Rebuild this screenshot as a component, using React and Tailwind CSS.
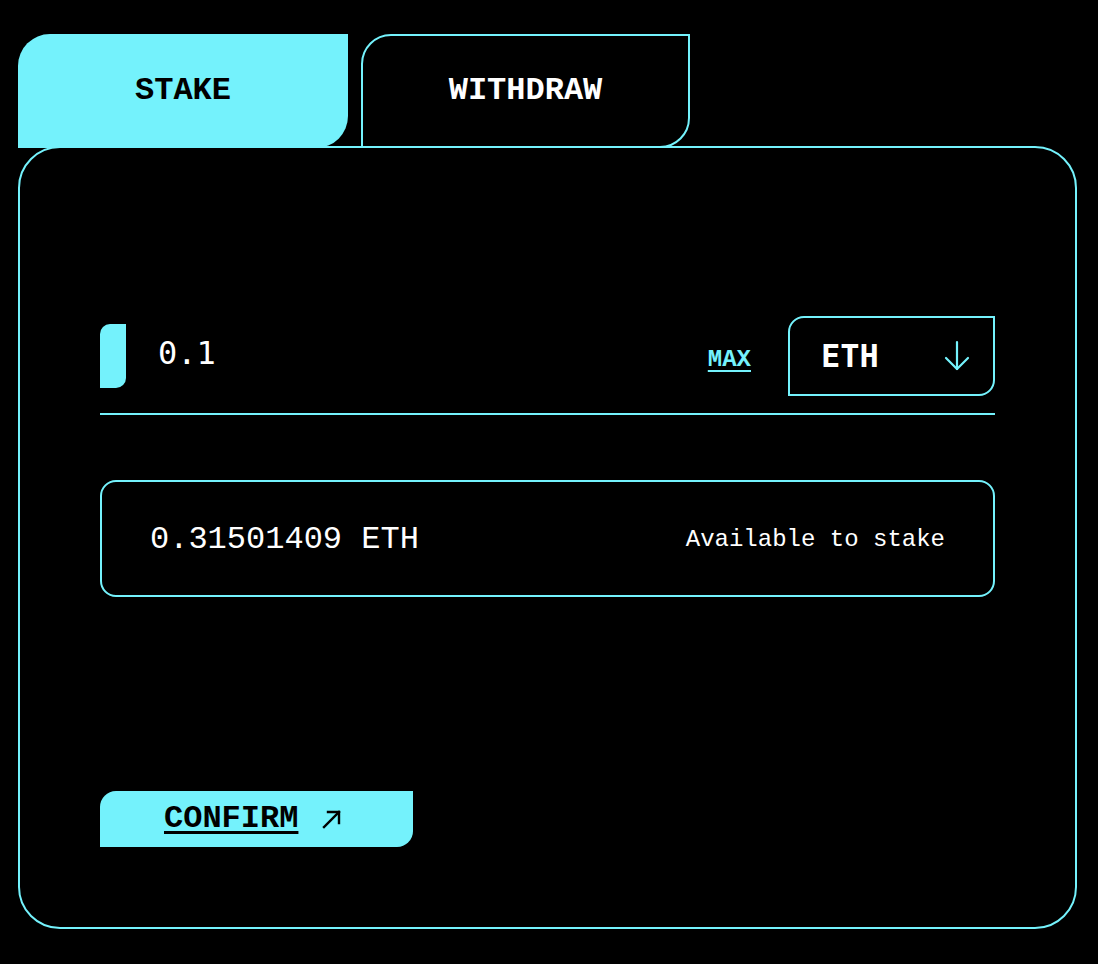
import { useState } from "react";

const mono = { fontFamily: '"Liberation Mono", "DejaVu Sans Mono", monospace' };

function ArrowDown() {
  return (
    <svg width="26" height="32" viewBox="0 0 26 32" fill="none" stroke="#74F2FC" strokeWidth="2.2" strokeLinecap="round" strokeLinejoin="round">
      <path d="M13 2 V29" />
      <path d="M2 18 L13 29 L24 18" />
    </svg>
  );
}

function ArrowUpRight() {
  return (
    <svg width="20" height="20" viewBox="0 0 20 20" fill="none" stroke="#000" strokeWidth="2.4" strokeLinecap="square">
      <path d="M2 18 L17 3" />
      <path d="M6 3 H17 V14" />
    </svg>
  );
}

export default function App() {
  const [tab, setTab] = useState("stake");
  const [amount, setAmount] = useState("0.1");

  return (
    <div className="min-h-screen w-full bg-black pt-[34px] pl-[18px] text-white" style={mono}>
      <div className="w-[1059px]">
        {/* Onglets */}
        <div className="flex gap-[13px]">
          <button
            onClick={() => setTab("stake")}
            className="flex h-[114px] w-[330px] items-center justify-center rounded-tl-[32px] rounded-br-[32px] bg-[#74F2FC] text-[32px] font-bold text-black"
          >
            STAKE
          </button>
          <button
            onClick={() => setTab("withdraw")}
            className="flex h-[114px] w-[329px] items-center justify-center rounded-tl-[30px] rounded-br-[30px] border-2 border-[#74F2FC] bg-black text-[32px] font-bold text-white"
          >
            WITHDRAW
          </button>
        </div>

        {/* Carte principale */}
        <div className="-mt-[2px] flex h-[783px] flex-col rounded-[42px] border-2 border-[#74F2FC] px-[80px] pt-[168px]">
          <div className="flex h-[80px] items-center">
            <div className="h-[64px] w-[26px] rounded-tl-[10px] rounded-br-[10px] bg-[#74F2FC]" />
            <input
              value={amount}
              onChange={(e) => setAmount(e.target.value)}
              className="ml-[32px] -mt-[6px] flex-1 bg-transparent text-[32px] text-white outline-none"
              style={{ fontFamily: '"DejaVu Sans Mono", monospace' }}
            />
            <button className="mt-[8px] text-[24px] font-bold text-[#74F2FC] underline decoration-2 underline-offset-4">
              MAX
            </button>
            <div className="ml-[37px] flex h-[80px] w-[207px] items-center justify-between rounded-tl-[16px] rounded-br-[16px] border-2 border-[#74F2FC] pl-[31px] pr-[23px]">
              <span className="text-[32px] font-bold" style={{ fontFamily: '"DejaVu Sans Mono", monospace' }}>ETH</span>
              <ArrowDown />
            </div>
          </div>
          <div className="mt-[17px] h-[2px] w-full bg-[#74F2FC]" />

          <div className="mt-[65px] flex h-[117px] items-center justify-between rounded-[16px] border-2 border-[#74F2FC] px-[48px] pt-[2px]">
            <span className="text-[32px]">0.31501409 ETH</span>
            <span className="text-[24px]">Available to stake</span>
          </div>

          <button className="mt-[194px] flex h-[56px] w-[313px] items-center rounded-tl-[16px] rounded-br-[16px] bg-[#74F2FC] pl-[64px] text-black">
            <span className="text-[32px] font-bold underline decoration-[3px] underline-offset-4">CONFIRM</span>
            <span className="ml-[24px]">
              <ArrowUpRight />
            </span>
          </button>
        </div>
      </div>
    </div>
  );
}
